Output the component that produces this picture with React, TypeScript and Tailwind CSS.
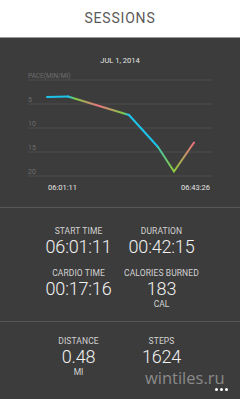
import React from "react";

const font = { fontFamily: "Roboto, 'DejaVu Sans', sans-serif" };

function Stat({ label, value, unit }: { label: string; value: string; unit?: string }) {
  return (
    <div className="flex flex-col items-center">
      <span className="text-[8.5px] leading-[10px] tracking-[0.1px] text-[#d2d2d2]">{label}</span>
      <span className="text-[18px] font-light leading-[21px] tracking-[-0.2px] text-[#f2f2f2]">{value}</span>
      {unit && <span className="text-[8.5px] leading-[10px] text-[#d2d2d2]">{unit}</span>}
    </div>
  );
}

function PaceChart() {
  const grid = [80, 104, 128, 152, 176];
  const labels = [
    { t: "5", y: 103 },
    { t: "10", y: 127 },
    { t: "15", y: 151 },
    { t: "20", y: 175 },
  ];
  return (
    <svg width="240" height="169" viewBox="0 38 240 169" className="block">
      <defs>
        <linearGradient id="g2" gradientUnits="userSpaceOnUse" x1="68" y1="0" x2="129" y2="0">
          <stop offset="0" stopColor="#1ec3ea" />
          <stop offset="0.12" stopColor="#7ec843" />
          <stop offset="0.5" stopColor="#ec7480" />
          <stop offset="0.9" stopColor="#7ec843" />
          <stop offset="1" stopColor="#1ec3ea" />
        </linearGradient>
        <linearGradient id="g4" gradientUnits="userSpaceOnUse" x1="150" y1="0" x2="174" y2="0">
          <stop offset="0" stopColor="#1ec3ea" />
          <stop offset="1" stopColor="#8ccb3a" />
        </linearGradient>
        <linearGradient id="g5" gradientUnits="userSpaceOnUse" x1="174" y1="0" x2="194" y2="0">
          <stop offset="0" stopColor="#8ccb3a" />
          <stop offset="1" stopColor="#ee7080" />
        </linearGradient>
      </defs>
      <text x="120" y="62.5" textAnchor="middle" fontSize="7.5" fill="#e6e6e6" style={font}>
        JUL 1, 2014
      </text>
      <text x="28" y="78" fontSize="6.5" fill="#6e6e6e" style={font}>
        PACE(MIN/MI)
      </text>
      {grid.map((y) => (
        <line key={y} x1="28" x2="213" y1={y} y2={y} stroke="#505050" strokeWidth="0.8" />
      ))}
      {labels.map((l) => (
        <text key={l.t} x="28" y={l.y - 1} fontSize="7" fill="#6e6e6e" style={font}>
          {l.t}
        </text>
      ))}
      <g fill="none" strokeWidth="2" strokeLinecap="round" strokeLinejoin="round">
        <polyline points="47,97 68,96.5" stroke="#1ec3ea" />
        <polyline points="68,96.5 129,115" stroke="url(#g2)" />
        <polyline points="129,115 158,147" stroke="#1ec3ea" />
        <polyline points="158,147 174,171.5" stroke="url(#g4)" />
        <polyline points="174,171.5 194,142.5" stroke="url(#g5)" />
      </g>
      <text x="48" y="190" fontSize="7.5" fill="#e6e6e6" style={font}>
        06:01:11
      </text>
      <text x="210" y="190" textAnchor="end" fontSize="7.5" fill="#e6e6e6" style={font}>
        06:43:26
      </text>
    </svg>
  );
}

export default function App() {
  return (
    <div className="flex h-[399px] w-[240px] flex-col overflow-hidden bg-[#3c3c3c]" style={font}>
      <header className="flex h-[38px] items-center justify-center border-b border-[#9a9a9a] bg-white">
        <h1 className="text-[14px] tracking-[0.8px] text-[#5a5a5a]">SESSIONS</h1>
      </header>
      <PaceChart />
      <div className="h-px bg-[#575757]" />
      <section className="h-[113px] pt-[18px]">
        <div className="mx-auto grid w-[166px] grid-cols-2 gap-y-[11px]">
          <Stat label="START TIME" value="06:01:11" />
          <Stat label="DURATION" value="00:42:15" />
          <Stat label="CARDIO TIME" value="00:17:16" />
          <Stat label="CALORIES BURNED" value="183" unit="CAL" />
        </div>
      </section>
      <div className="h-px bg-[#575757]" />
      <section className="relative flex-1 pt-[14px]">
        <div className="mx-auto grid w-[166px] grid-cols-2">
          <Stat label="DISTANCE" value="0.48" unit="MI" />
          <Stat label="STEPS" value="1624" />
        </div>
        <span
          className="absolute left-[145px] top-[47px] text-[16.5px] leading-[17px] text-[#8a8a8a]"
          style={{ fontFamily: "'Open Sans', sans-serif" }}
        >
          wintiles.ru
        </span>
        <div className="absolute right-[12px] top-[66px] flex gap-[2px]">
          <span className="h-[3px] w-[3px] rounded-full bg-white" />
          <span className="h-[3px] w-[3px] rounded-full bg-white" />
          <span className="h-[3px] w-[3px] rounded-full bg-white" />
        </div>
      </section>
    </div>
  );
}
